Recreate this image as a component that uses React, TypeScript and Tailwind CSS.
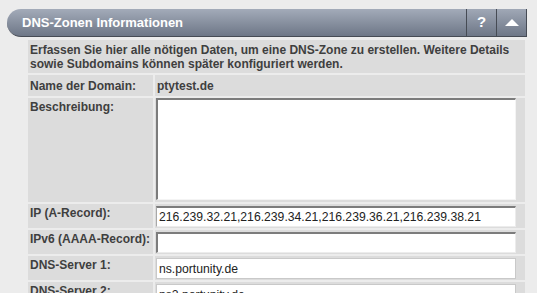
import React from "react";

const labelCls =
  "w-[125px] shrink-0 bg-[#dcdcdc] pl-[2px] pt-[2px] text-[12px] leading-[14px] font-bold text-[#3f3f3f]";

function InputRow({
  label,
  value,
  variant,
}: {
  label: string;
  value: string;
  variant: "dark" | "darkleft" | "light";
}) {
  const border =
    variant === "dark"
      ? "border-t-2 border-t-[#7c7c7c] border-l border-l-[#a8a8a8] border-r border-r-[#ececec] border-b border-b-[#ececec]"
      : variant === "darkleft"
      ? "border-t-2 border-t-[#7c7c7c] border-l-2 border-l-[#7c7c7c] border-r border-r-[#ececec] border-b border-b-[#ececec]"
      : "border border-[#c9c9c9]";
  return (
    <div className="flex h-[24px] gap-[2px]">
      <div className={labelCls}>{label}</div>
      <div className="flex-1 bg-[#dcdcdc] pl-[1px] pt-[2px]">
        <input
          readOnly
          value={value}
          className={`block w-[360px] h-[21px] bg-white px-[2px] text-[12.2px] text-[#222] outline-none ${border}`}
        />
      </div>
    </div>
  );
}

export default function App() {
  return (
    <div className="w-[537px] h-[293px] overflow-hidden bg-[#ececec] font-['Liberation_Sans',Arial,sans-serif] pt-[9px]">
      {/* Header */}
      <div className="ml-[7px] flex h-[28px] w-[520px]">
        <div className="flex flex-1 items-center rounded-l-[14px] border-b border-r border-[#464b54] bg-gradient-to-b from-[#a3abb9] to-[#6e7787] pl-[15px] text-[13px] font-bold text-white">
          DNS-Zonen Informationen
        </div>
        <div className="flex w-[30px] items-center justify-center border-b border-r border-[#464b54] bg-gradient-to-b from-[#a0a8b6] to-[#6e7787] text-[15px] font-bold text-white">
          ?
        </div>
        <div className="flex w-[30px] items-center justify-center border-b border-r border-[#464b54] bg-gradient-to-b from-[#a0a8b6] to-[#6e7787]">
          <svg width="14" height="7" viewBox="0 0 14 7">
            <path d="M0 7 L7 0 L14 7 Z" fill="#ffffff" />
          </svg>
        </div>
      </div>

      {/* Content */}
      <div className="ml-[28px] mt-[3px] flex w-[497px] flex-col gap-[2px]">
        <div className="h-[33px] bg-[#dcdcdc] px-[2px] pt-[3px] text-[12px] leading-[14px] font-bold text-[#3f3f3f]">
          Erfassen Sie hier alle nötigen Daten, um eine DNS-Zone zu erstellen. Weitere Details
          <br />
          sowie Subdomains können später konfiguriert werden.
        </div>

        <div className="flex h-[21px] gap-[2px]">
          <div className="flex w-[125px] shrink-0 items-center bg-[#dcdcdc] pl-[2px] text-[12px] leading-[14px] font-bold text-[#3f3f3f]">
            Name der Domain:
          </div>
          <div className="flex flex-1 items-center bg-[#dcdcdc] pl-[2px] text-[12px] leading-[14px] font-bold text-[#3f3f3f]">
            ptytest.de
          </div>
        </div>

        <div className="flex h-[104px] gap-[2px]">
          <div className={labelCls}>Beschreibung:</div>
          <div className="flex-1 bg-[#dcdcdc] pl-[1px]">
            <textarea
              readOnly
              className="block h-[102px] w-[360px] resize-none border-t-2 border-l-2 border-t-[#7c7c7c] border-l-[#7c7c7c] border-r border-b border-r-[#f4f4f4] border-b-[#f4f4f4] bg-white outline-none"
            />
          </div>
        </div>

        <InputRow
          label="IP (A-Record):"
          value="216.239.32.21,216.239.34.21,216.239.36.21,216.239.38.21"
          variant="dark"
        />
        <InputRow label="IPv6 (AAAA-Record):" value="" variant="darkleft" />
        <InputRow label="DNS-Server 1:" value="ns.portunity.de" variant="light" />
        <InputRow label="DNS-Server 2:" value="ns2.portunity.de" variant="light" />
      </div>
    </div>
  );
}
